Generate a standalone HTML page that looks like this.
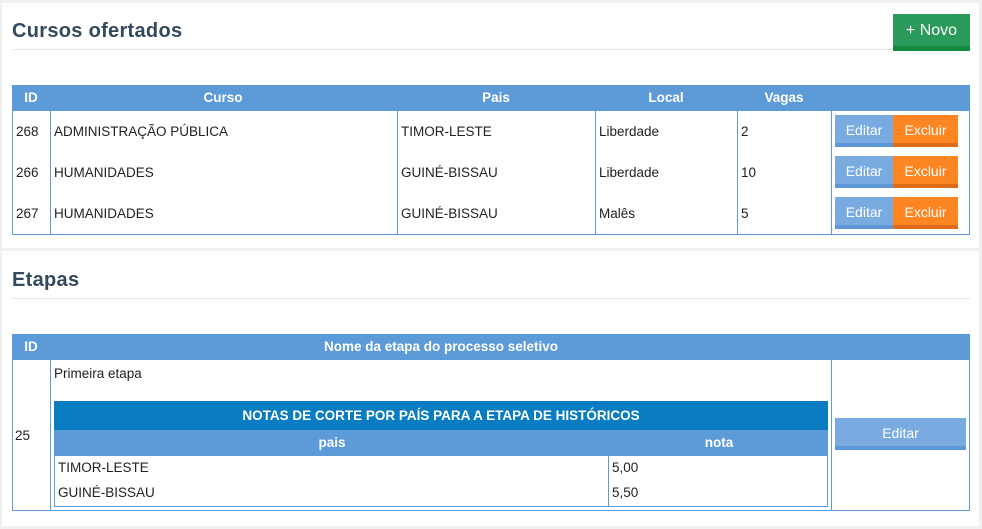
<!DOCTYPE html>
<html><head><meta charset="utf-8"><style>
*{box-sizing:border-box;margin:0;padding:0}
body{width:982px;height:529px;background:#f0f0f0;font-family:"Liberation Sans",sans-serif;font-size:13.5px;color:#222;position:relative;overflow:hidden}
.a{position:absolute}
.panel{background:#fff}
h2{position:absolute;font-size:20px;font-weight:bold;color:#34495e;letter-spacing:0.3px}
.hr{position:absolute;height:1px;background:#e5e5e5}
.th{position:absolute;background:#5d9ad8;color:#fff;font-weight:bold;font-size:13.5px}
.th span{position:absolute;top:0;line-height:25px;transform:translateX(-50%)}
.box{position:absolute;border:1px solid #5d9ad8;border-top:none}
.vl{position:absolute;width:1px;background:#5d9ad8}
.t{position:absolute;white-space:nowrap}
.btn{position:absolute;color:#fff;text-align:center;font-size:14px}
.ed{background:#7aabe0;border-bottom:4px solid #5d97d8}
.ex{background:#fd8623;border-bottom:4px solid #e06c1a}
</style></head><body>
<div class="a panel" style="left:2px;top:3px;width:977px;height:245px"></div>
<div class="a panel" style="left:2px;top:251px;width:977px;height:275px"></div>

<h2 style="left:12px;top:20px">Cursos ofertados</h2>
<div class="hr" style="left:12px;top:49px;width:880px"></div>
<div class="btn" style="left:893px;top:14px;width:77px;height:37px;background:#2a9a5a;border-bottom:5px solid #13883f;line-height:34px;font-size:16px">+ Novo</div>

<div class="th" style="left:12px;top:85px;width:958px;height:26px">
<span style="left:19px">ID</span><span style="left:211px">Curso</span><span style="left:484px">Pais</span><span style="left:654px">Local</span><span style="left:772px">Vagas</span></div>
<div class="box" style="left:12px;top:111px;width:958px;height:124px"></div>
<div class="vl" style="left:50px;top:111px;height:123px"></div>
<div class="vl" style="left:397px;top:111px;height:123px"></div>
<div class="vl" style="left:595px;top:111px;height:123px"></div>
<div class="vl" style="left:737px;top:111px;height:123px"></div>
<div class="vl" style="left:831px;top:111px;height:123px"></div>

<div class="t" style="left:16px;top:124px">268</div><div class="t" style="left:54px;top:124px">ADMINISTRAÇÃO PÚBLICA</div><div class="t" style="left:401px;top:124px">TIMOR-LESTE</div><div class="t" style="left:599px;top:124px">Liberdade</div><div class="t" style="left:741px;top:124px">2</div>
<div class="t" style="left:16px;top:165px">266</div><div class="t" style="left:54px;top:165px">HUMANIDADES</div><div class="t" style="left:401px;top:165px">GUINÉ-BISSAU</div><div class="t" style="left:599px;top:165px">Liberdade</div><div class="t" style="left:741px;top:165px">10</div>
<div class="t" style="left:16px;top:206px">267</div><div class="t" style="left:54px;top:206px">HUMANIDADES</div><div class="t" style="left:401px;top:206px">GUINÉ-BISSAU</div><div class="t" style="left:599px;top:206px">Malês</div><div class="t" style="left:741px;top:206px">5</div>

<div class="btn ed" style="left:835px;top:115px;width:58px;height:32px;line-height:30px">Editar</div><div class="btn ex" style="left:893px;top:115px;width:65px;height:32px;line-height:30px">Excluir</div>
<div class="btn ed" style="left:835px;top:156px;width:58px;height:32px;line-height:30px">Editar</div><div class="btn ex" style="left:893px;top:156px;width:65px;height:32px;line-height:30px">Excluir</div>
<div class="btn ed" style="left:835px;top:197px;width:58px;height:32px;line-height:30px">Editar</div><div class="btn ex" style="left:893px;top:197px;width:65px;height:32px;line-height:30px">Excluir</div>

<h2 style="left:12px;top:269px">Etapas</h2>
<div class="hr" style="left:12px;top:298px;width:958px"></div>

<div class="th" style="left:12px;top:334px;width:958px;height:26px">
<span style="left:19px">ID</span><span style="left:429px">Nome da etapa do processo seletivo</span></div>
<div class="box" style="left:12px;top:360px;width:958px;height:151px"></div>
<div class="vl" style="left:50px;top:360px;height:150px"></div>
<div class="vl" style="left:831px;top:360px;height:150px"></div>
<div class="t" style="left:15px;top:428px">25</div>
<div class="t" style="left:54px;top:366px">Primeira etapa</div>

<div class="a" style="left:54px;top:401px;width:774px;height:29px;background:#0a7cc1;color:#fff;font-weight:bold;text-align:center;line-height:29px">NOTAS DE CORTE POR PAÍS PARA A ETAPA DE HISTÓRICOS</div>
<div class="th" style="left:54px;top:430px;width:774px;height:26px"><span style="left:278px">pais</span><span style="left:665px">nota</span></div>
<div class="box" style="left:54px;top:456px;width:774px;height:51px"></div>
<div class="vl" style="left:608px;top:456px;height:50px"></div>
<div class="t" style="left:58px;top:460px">TIMOR-LESTE</div><div class="t" style="left:612px;top:460px">5,00</div>
<div class="t" style="left:58px;top:485px">GUINÉ-BISSAU</div><div class="t" style="left:612px;top:485px">5,50</div>

<div class="btn ed" style="left:835px;top:418px;width:131px;height:32px;line-height:30px">Editar</div>
</body></html>
